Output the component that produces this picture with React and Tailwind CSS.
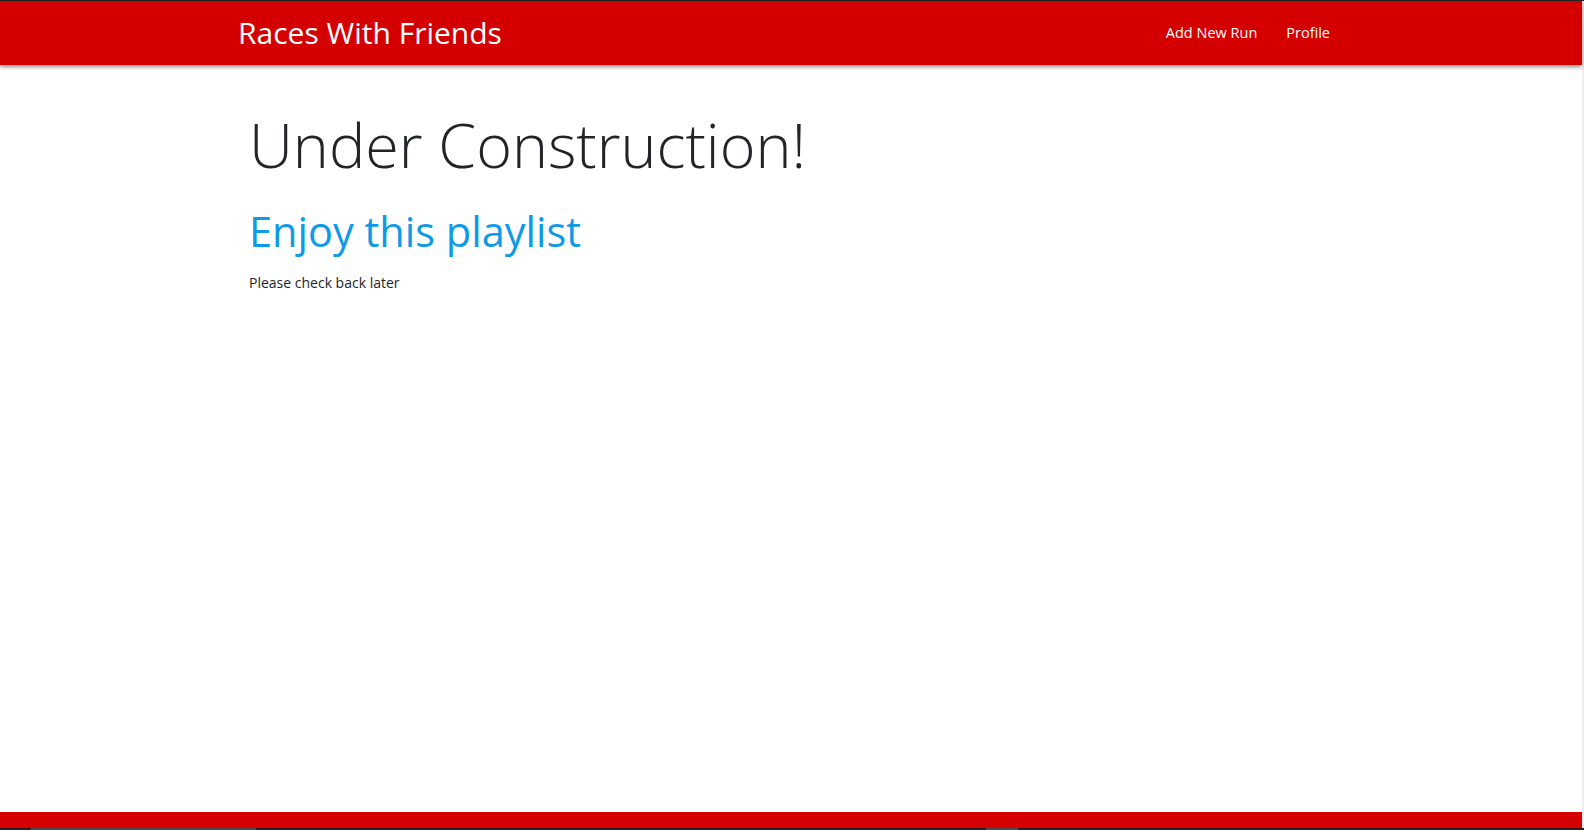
import React from "react";

const font = { fontFamily: '"Open Sans", "Noto Sans", sans-serif' };

function NavBar() {
  return (
    <header className="relative z-10 h-16 bg-[#d40000] shadow-[0_2px_4px_rgba(0,0,0,0.45)]">
      <div className="mx-auto flex h-full w-[1140px] items-center justify-between px-[15px]">
        <a href="#" className="ml-[2px] text-[30px] leading-none text-white">
          Races With Friends
        </a>
        <nav className="flex items-center">
          <a href="#" className="px-[15px] text-[14.5px] text-white">
            Add New Run
          </a>
          <a href="#" className="pl-[14px] pr-4 text-[14.5px] text-white">
            Profile
          </a>
        </nav>
      </div>
    </header>
  );
}

export default function App() {
  return (
    <div className="flex h-[830px] flex-col overflow-hidden bg-white" style={font}>
      <div className="h-px bg-[#222]" />
      <div className="flex flex-1 flex-col border-r-2 border-[#eeeeee]">
        <NavBar />
        <main className="flex-1">
          <div className="mx-auto w-[1140px] px-[28px] pt-[43px]">
            <h1 className="text-[61px] font-light leading-[1.2] text-[#212529]">
              Under Construction!
            </h1>
            <h2 className="mt-[26px] text-[41.5px] leading-[1.2] text-[#0e9ae6]">
              Enjoy this playlist
            </h2>
            <p className="mt-[15px] text-[14px] text-[#212529]">Please check back later</p>
          </div>
        </main>
        <footer className="h-4 bg-[#d40000]" />
      </div>
      <div className="flex h-[2px] bg-[#2a1f1f]">
        <div className="ml-[31px] w-[225px] bg-[#4a4a4a]" />
        <div className="ml-[730px] w-[32px] bg-[#4a4a4a]" />
      </div>
    </div>
  );
}
